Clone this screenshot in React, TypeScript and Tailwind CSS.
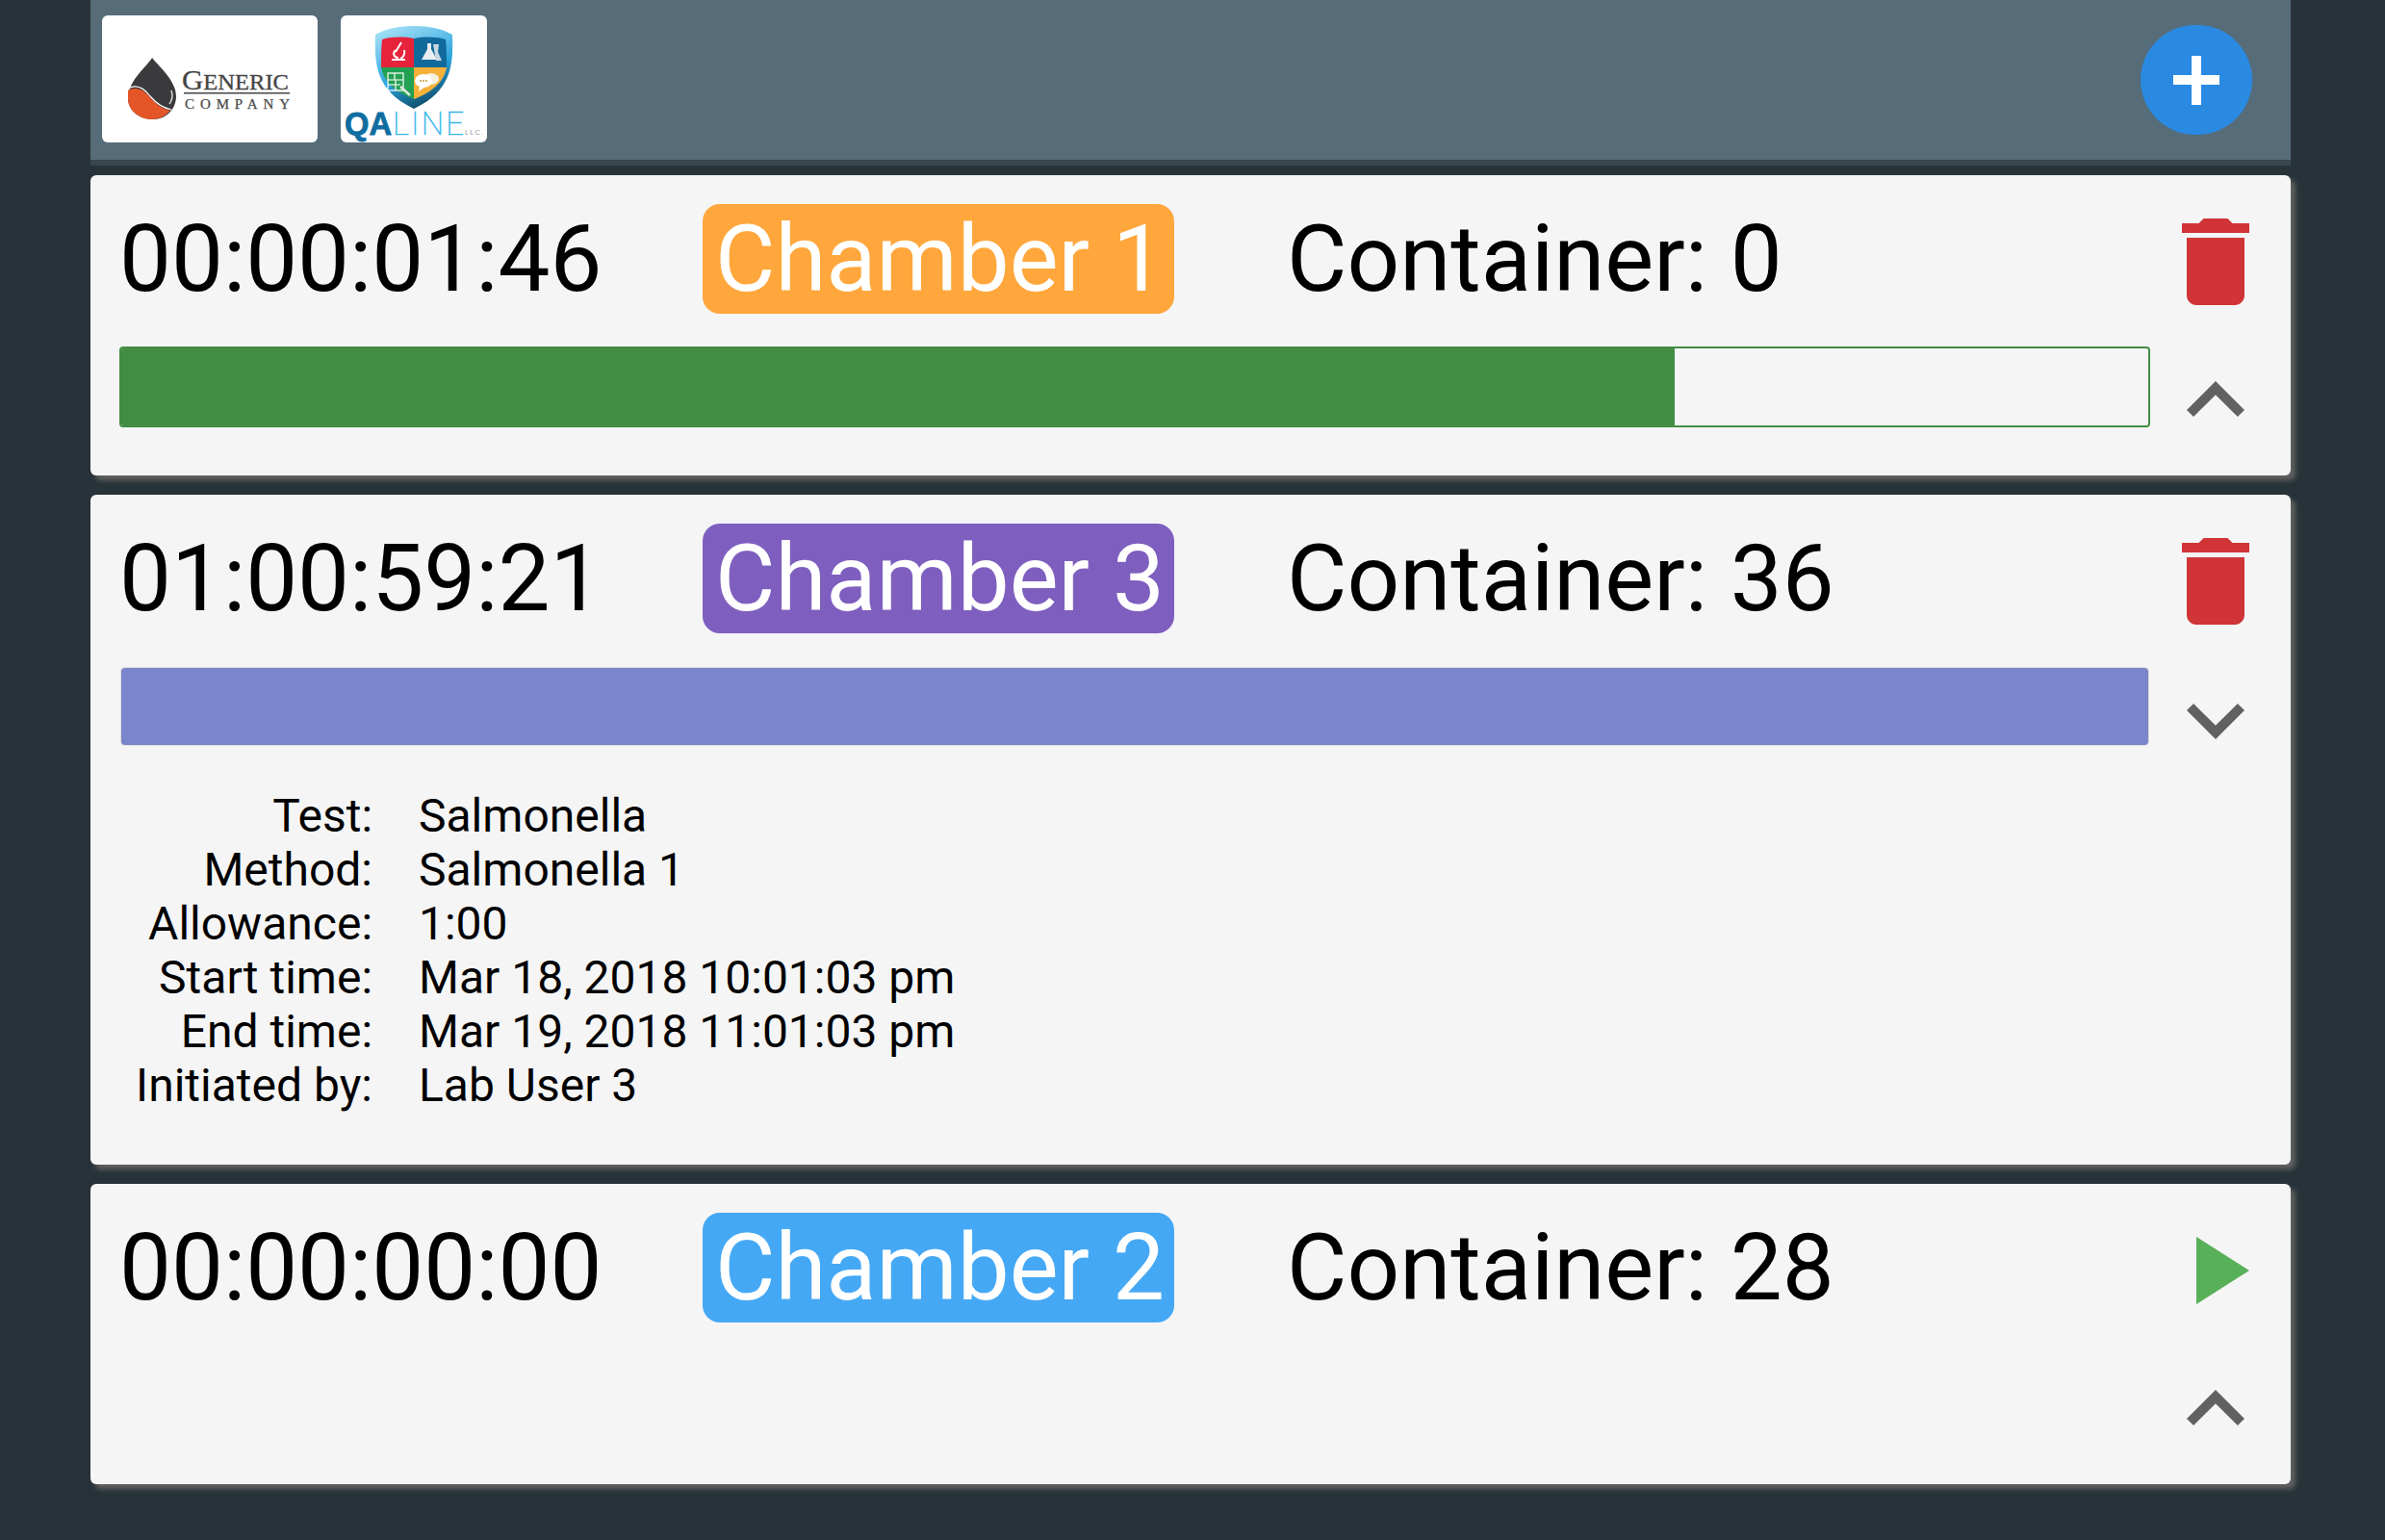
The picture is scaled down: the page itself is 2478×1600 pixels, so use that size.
import React from "react";

function GenericLogo() {
  return (
    <svg width="224" height="132" viewBox="0 0 224 132">
      <path d="M52 44 C46 54 29 66 27 84 C26 98 38 108 53 108 C68 108 77 96 77 84 C77 68 60 54 52 44Z" fill="#3a3a3c" />
      <path d="M27 78 C34 74 42 76 49 84 C55 91 62 97 71 99 C66 104 60 108 52 108 C38 108 26 98 27 84Z" fill="#e45527" />
      <path d="M27 76 C36 71 44 76 50 84 C56 91 63 96 72 98" fill="none" stroke="#ffffff" strokeWidth="1.2" />
      <path d="M72 78 C74 84 73 88 70 92" fill="none" stroke="#d9d9d9" strokeWidth="1.5" />
      <text x="83" y="77" fontFamily="'Liberation Serif', serif" fill="#444444" stroke="#444444" strokeWidth="0.3" textLength="111" lengthAdjust="spacingAndGlyphs">
        <tspan fontSize="30">G</tspan>
        <tspan fontSize="24">ENERIC</tspan>
      </text>
      <rect x="85" y="80" width="110" height="1.5" fill="#444444" />
      <text x="86" y="97" fontFamily="'Liberation Serif', serif" fontSize="15" fill="#4a4a4a" stroke="#4a4a4a" strokeWidth="0.25" textLength="109">COMPANY</text>
    </svg>
  );
}

function QaLogo() {
  return (
    <svg width="152" height="132" viewBox="0 0 152 132">
      <defs>
        <linearGradient id="rim" x1="0.2" y1="0" x2="0.6" y2="1">
          <stop offset="0" stopColor="#a5e0f7" />
          <stop offset="0.6" stopColor="#2aa3dc" />
          <stop offset="1" stopColor="#0d4a66" />
        </linearGradient>
      </defs>
      <path d="M76 11 C92 11 106 14 116 20 C117 50 116 78 76 97 C36 78 35 50 36 20 C46 14 60 11 76 11Z" fill="url(#rim)" />
      <path d="M43 25 C53 22 65 22 76 24 V54 H42 C42 44 42 34 43 25Z" fill="#e6233a" />
      <path d="M76 24 C87 22 99 22 109 25 C110 34 110 44 110 54 H76Z" fill="#11699c" />
      <path d="M42 54 H76 V87 C58 80 45 70 42 54Z" fill="#23a052" />
      <path d="M76 54 H110 C107 70 94 80 76 87Z" fill="#f6b13b" />
      <g stroke="#ffffff" fill="none" strokeWidth="2">
        <path d="M53 46 H67 M63 28 L57 38 M57 36 C53 40 56 44 60 44 M66 36 C67 40 65 44 62 45" />
      </g>
      <path d="M84 46 L90 35 V29 H94 V35 L100 46Z" fill="#e8eef2" />
      <path d="M96 30 H102 L101 38 L105 47 H99Z" fill="#c8d8e2" />
      <g stroke="#ffffff" fill="none" strokeWidth="1.2">
        <rect x="49" y="60" width="16" height="18" />
        <path d="M49 67 H65 M56 60 V67 M49 72 H62 M57 67 V78" />
      </g>
      <path d="M62 74 L72 83" stroke="#e2e8e2" strokeWidth="2.5" />
      <ellipse cx="94" cy="66" rx="8" ry="6" fill="#f5f0e0" />
      <ellipse cx="86" cy="68" rx="9" ry="7" fill="#ffffff" />
      <path d="M82 73 L81 79 L88 74Z" fill="#ffffff" />
      <circle cx="83" cy="68" r="1" fill="#c99a3a" />
      <circle cx="86" cy="68" r="1" fill="#c99a3a" />
      <circle cx="89" cy="68" r="1" fill="#c99a3a" />
      <text x="4" y="124" fontFamily="'Liberation Sans', sans-serif" fontWeight="700" fontSize="33" fill="#0f6d9f" textLength="49" lengthAdjust="spacingAndGlyphs" stroke="#0f6d9f" strokeWidth="0.8">QA</text>
      <text x="54" y="124" fontFamily="Roboto, sans-serif" fontWeight="100" fontSize="33" fill="#35b7e8" stroke="#35b7e8" strokeWidth="0.5" textLength="74">LINE</text>
      <text x="129" y="124" fontFamily="'Liberation Sans', sans-serif" fontSize="7.5" fill="#9a9a9a" textLength="19">LLC.</text>
    </svg>
  );
}

function Trash() {
  return (
    <svg width="120" height="120" viewBox="0 0 24 24" fill="#d03437">
      <path d="M6 19c0 1.1.9 2 2 2h8c1.1 0 2-.9 2-2V7H6v12zM19 4h-3.5l-1-1h-5l-1 1H5v2h14V4z" />
    </svg>
  );
}

function Play() {
  return (
    <svg width="120" height="120" viewBox="0 0 24 24" fill="#58b058">
      <path d="M8 5v14l11-7z" />
    </svg>
  );
}

function Chevron({ down }: { down?: boolean }) {
  return (
    <svg width="120" height="120" viewBox="0 0 24 24" fill="#616161">
      <path d={down ? "M16.59 8.59L12 13.17 7.41 8.59 6 10l6 6 6-6z" : "M12 8l-6 6 1.41 1.41L12 10.83l4.59 4.58L18 14z"} />
    </svg>
  );
}

type CardProps = {
  time: string;
  chamber: string;
  badge: string;
  container: string;
  action: React.ReactNode;
  down?: boolean;
  bar?: React.ReactNode;
  children?: React.ReactNode;
};

function Card({ time, chamber, badge, container, action, down, bar, children }: CardProps) {
  return (
    <div className="flex flex-col rounded-[6px] bg-[#f5f5f5] pb-[18px] pl-[30px] pr-[10px] pt-[30px] shadow-[5px_5px_5px_0_#616161]">
      <div className="flex">
        <div className="w-[2110px]">
          <div className="flex h-[114px] items-center whitespace-nowrap text-[96px] leading-[114px] text-black">
            <div className="w-[606px]">{time}</div>
            <div className={`h-[114px] w-[490px] rounded-[18px] px-[13px] text-white ${badge}`}>{chamber}</div>
            <div className="ml-[117px]">{container}</div>
          </div>
          <div className="mt-[34px] h-[84px]">{bar}</div>
        </div>
        <div className="flex flex-1 flex-col items-center gap-[24px]">
          {action}
          <Chevron down={down} />
        </div>
      </div>
      {children}
    </div>
  );
}

const details = [
  ["Test:", "Salmonella"],
  ["Method:", "Salmonella 1"],
  ["Allowance:", "1:00"],
  ["Start time:", "Mar 18, 2018 10:01:03 pm"],
  ["End time:", "Mar 19, 2018 11:01:03 pm"],
  ["Initiated by:", "Lab User 3"],
];

export default function App() {
  return (
    <div className="min-h-screen bg-[#283339] pl-[94px] pr-[98px] font-[Roboto,sans-serif]">
      <header className="flex h-[172px] items-start border-b-[6px] border-[#37474f] bg-[#566c79] pl-[12px] pr-[40px] pt-[16px]">
        <div className="h-[132px] w-[224px] overflow-hidden rounded-[6px] bg-white">
          <GenericLogo />
        </div>
        <div className="ml-[24px] h-[132px] w-[152px] overflow-hidden rounded-[6px] bg-white">
          <QaLogo />
        </div>
        <button className="ml-auto mt-[10px] flex h-[114px] w-[116px] items-center justify-center rounded-full bg-[#2a8ae2]">
          <svg width="48" height="51" viewBox="0 0 48 51" fill="#ffffff">
            <rect x="19" y="0" width="10" height="51" />
            <rect x="0" y="20" width="48" height="10" />
          </svg>
        </button>
      </header>
      <div className="mt-[10px] flex flex-col gap-[20px]">
        <Card
          time="00:00:01:46"
          chamber="Chamber 1"
          badge="bg-[#ffa73c]"
          container="Container: 0"
          action={<Trash />}
          bar={
            <div className="h-full overflow-hidden rounded-[4px] border-2 border-[#428d43]">
              <div className="h-full w-[1614px] bg-[#428d43]" />
            </div>
          }
        />
        <Card
          time="01:00:59:21"
          chamber="Chamber 3"
          badge="bg-[#7e5fbf]"
          container="Container: 36"
          action={<Trash />}
          down
          bar={
            <div className="h-full p-[1px]">
              <div className="h-full rounded-[4px] border border-[#dddddd] bg-[#7986cb] bg-clip-padding" />
            </div>
          }
        >
          <div className="mb-[36px] mt-[12px] grid grid-cols-[263px_1fr] gap-x-[48px] whitespace-nowrap text-[48px] leading-[56px] text-black">
            {details.map(([label, value]) => (
              <React.Fragment key={label}>
                <div className="text-right">{label}</div>
                <div>{value}</div>
              </React.Fragment>
            ))}
          </div>
        </Card>
        <Card
          time="00:00:00:00"
          chamber="Chamber 2"
          badge="bg-[#45a8f5]"
          container="Container: 28"
          action={<Play />}
        />
      </div>
    </div>
  );
}
